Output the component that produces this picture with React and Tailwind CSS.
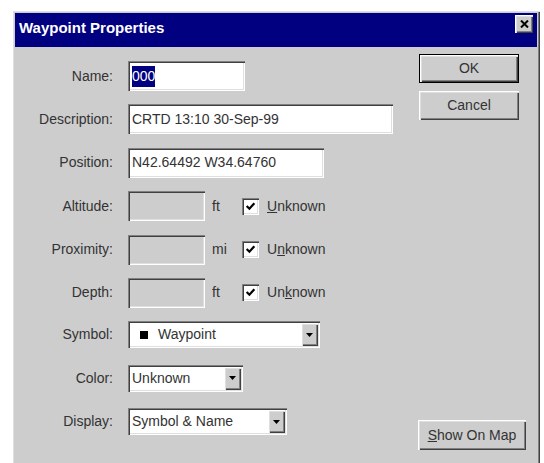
const sunken =
  "shadow-[inset_1px_1px_0_#808080,inset_2px_2px_0_#404040,inset_-1px_-1px_0_#ffffff,inset_-2px_-2px_0_#dfdfdf]";
const raised =
  "shadow-[inset_1px_1px_0_#ffffff,inset_2px_2px_0_#dfdfdf,inset_-1px_-1px_0_#404040,inset_-2px_-2px_0_#808080]";

function Label({ children, h = "h-[30px]" }) {
  return (
    <div className={`w-[98px] ${h} flex items-center justify-end shrink-0`}>
      {children}
    </div>
  );
}

function Row({ label, children, h }) {
  return (
    <div className="flex h-[43.4px] items-start">
      <Label h={h}>{label}</Label>
      <div className="ml-[15px] flex items-start">{children}</div>
    </div>
  );
}

function TextField({ width, children }) {
  return (
    <div className={`${width} h-[30px] bg-white ${sunken} flex items-center pl-[4px] whitespace-nowrap overflow-hidden`}>
      {children}
    </div>
  );
}

function CheckBox() {
  return (
    <div className={`w-[17px] h-[17px] bg-white ${sunken} flex items-center justify-center`}>
      <svg width="11" height="11" viewBox="0 0 10 10">
        <path d="M1.5 4.5 L4 7 L8.5 2" fill="none" stroke="#000" strokeWidth="2" />
      </svg>
    </div>
  );
}

function UnitRow({ label, unit, hotkey }) {
  const word = "Unknown";
  return (
    <Row label={label}>
      <div className={`w-[77px] h-[30px] bg-[#cdcdcd] ${sunken}`} />
      <div className="w-[37px] h-[30px] flex items-center pl-[7px]">{unit}</div>
      <div className="h-[30px] flex items-center gap-[8px]">
        <CheckBox />
        <span>
          {word.split("").map((c, i) => (
            <span key={i} className={i === hotkey ? "underline" : ""}>
              {c}
            </span>
          ))}
        </span>
      </div>
    </Row>
  );
}

function Combo({ width, children }) {
  return (
    <div className={`${width} h-[27px] bg-white ${sunken} flex items-center p-[2px]`}>
      <div className="flex-1 flex items-center pl-[2px] whitespace-nowrap overflow-hidden">
        {children}
      </div>
      <div className={`w-[17px] h-full bg-[#cdcdcd] ${raised} flex items-center justify-center`}>
        <svg width="7" height="4" viewBox="0 0 7 4">
          <path d="M0 0 H7 L3.5 4 Z" fill="#000" />
        </svg>
      </div>
    </div>
  );
}

function Button({ children, width = "w-[100px]", isDefault, className = "" }) {
  return (
    <div
      className={`${width} h-[29px] bg-[#cdcdcd] flex items-center justify-center ${
        isDefault ? "border border-black" : ""
      } ${className}`}
    >
      <div className={`w-full h-full flex items-center justify-center ${raised}`}>{children}</div>
    </div>
  );
}

export default function App() {
  return (
    <div
      className="w-[544px] h-[463px] overflow-hidden bg-white pt-[10px] pl-[12px] text-[14px] text-[#333333]"
      style={{ fontFamily: '"Liberation Sans", Arial, sans-serif' }}
    >
      <div className={`w-[528px] h-[470px] bg-[#cdcdcd] p-[3px] ${raised}`}>
        {/* caption */}
        <div className="h-[34px] bg-[#000080] flex items-start justify-between pl-[4px] pr-[4px]">
          <div className="pt-[6px] text-white font-bold text-[15px] leading-[18px]">
            Waypoint Properties
          </div>
          <div className={`mt-[2px] w-[18px] h-[18px] bg-[#cdcdcd] ${raised} flex items-center justify-center`}>
            <svg width="9" height="8" viewBox="0 0 9 8">
              <path d="M1 0.5 L8 7.5 M8 0.5 L1 7.5" stroke="#000" strokeWidth="2" />
            </svg>
          </div>
        </div>

        <div className="flex h-[411px]">
          {/* fields */}
          <div className="flex flex-col pt-[14px]">
            <Row label="Name:">
              <TextField width="w-[117px]">
                <span className="bg-[#000080] text-white">000</span>
              </TextField>
            </Row>
            <Row label="Description:">
              <TextField width="w-[265px]">CRTD 13:10 30-Sep-99</TextField>
            </Row>
            <Row label="Position:">
              <TextField width="w-[196px]">N42.64492 W34.64760</TextField>
            </Row>
            <UnitRow label="Altitude:" unit="ft" hotkey={0} />
            <UnitRow label="Proximity:" unit="mi" hotkey={1} />
            <UnitRow label="Depth:" unit="ft" hotkey={2} />
            <Row label="Symbol:" h="h-[27px]">
              <Combo width="w-[192px]">
                <span className="w-[8px] h-[8px] bg-black ml-[8px] mr-[10px]" />
                Waypoint
              </Combo>
            </Row>
            <Row label="Color:" h="h-[27px]">
              <Combo width="w-[115px]">Unknown</Combo>
            </Row>
            <Row label="Display:" h="h-[27px]">
              <Combo width="w-[159px]">Symbol &amp; Name</Combo>
            </Row>
          </div>

          {/* buttons */}
          <div className="ml-auto mr-[11px] w-[108px] flex flex-col pt-[7px] pb-[8px]">
            <Button isDefault className="ml-[1px]">OK</Button>
            <Button className="ml-[1px] mt-[8px]">Cancel</Button>
            <Button width="w-full" className="mt-auto h-[30px]">
              <span>
                <span className="underline">S</span>how On Map
              </span>
            </Button>
          </div>
        </div>
      </div>
    </div>
  );
}
